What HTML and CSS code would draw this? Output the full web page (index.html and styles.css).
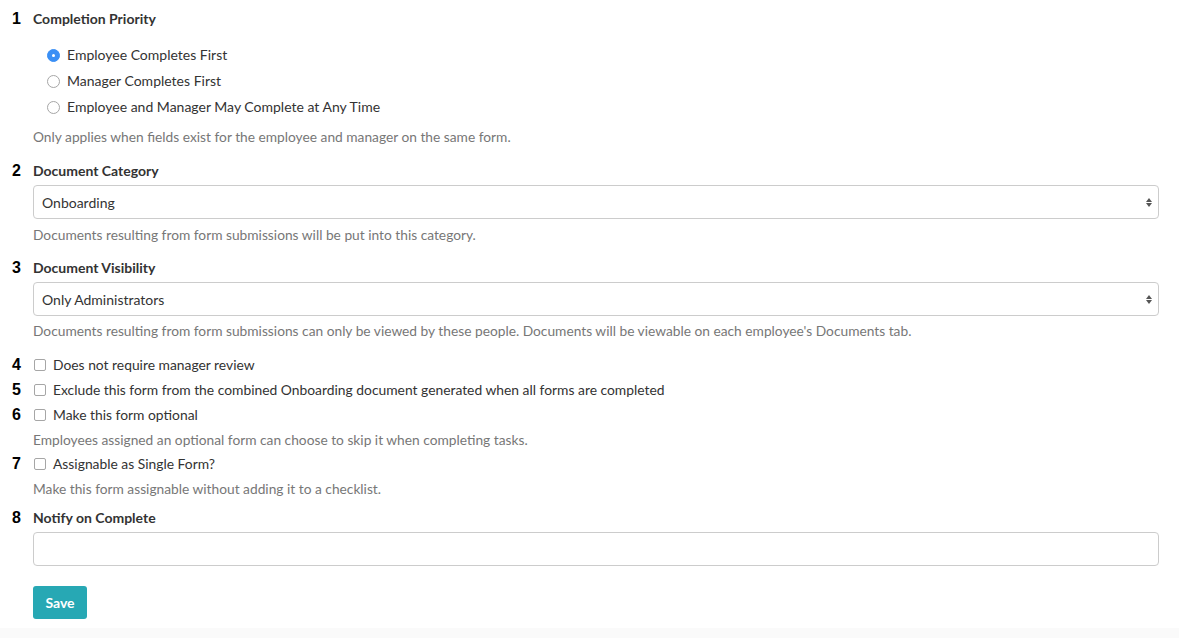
FILE: index.html
```html
<!DOCTYPE html>
<html>
<head>
<meta charset="utf-8">
<link rel="stylesheet" href="styles.css">
</head>
<body>
<div class="page">
  <form class="form">
    <div class="row title-row r1">
      <span class="num">1</span>
      <span class="title">Completion Priority</span>
    </div>
    <div class="radios">
      <label class="radio-row"><span class="radio checked"></span>Employee Completes First</label>
      <label class="radio-row"><span class="radio"></span>Manager Completes First</label>
      <label class="radio-row"><span class="radio"></span>Employee and Manager May Complete at Any Time</label>
    </div>
    <p class="help h1">Only applies when fields exist for the employee and manager on the same form.</p>

    <div class="row title-row r2">
      <span class="num">2</span>
      <span class="title">Document Category</span>
    </div>
    <div class="select"><span>Onboarding</span><span class="arrows"><i class="up"></i><i class="down"></i></span></div>
    <p class="help h2">Documents resulting from form submissions will be put into this category.</p>

    <div class="row title-row r3">
      <span class="num">3</span>
      <span class="title">Document Visibility</span>
    </div>
    <div class="select"><span>Only Administrators</span><span class="arrows"><i class="up"></i><i class="down"></i></span></div>
    <p class="help h3">Documents resulting from form submissions can only be viewed by these people. Documents will be viewable on each employee's Documents tab.</p>

    <div class="row check-row c4">
      <span class="num">4</span>
      <span class="check"></span><span class="label">Does not require manager review</span>
    </div>
    <div class="row check-row c5">
      <span class="num">5</span>
      <span class="check"></span><span class="label">Exclude this form from the combined Onboarding document generated when all forms are completed</span>
    </div>
    <div class="row check-row c5">
      <span class="num">6</span>
      <span class="check"></span><span class="label">Make this form optional</span>
    </div>
    <p class="help h6">Employees assigned an optional form can choose to skip it when completing tasks.</p>
    <div class="row check-row c7">
      <span class="num">7</span>
      <span class="check"></span><span class="label">Assignable as Single Form?</span>
    </div>
    <p class="help h7">Make this form assignable without adding it to a checklist.</p>

    <div class="row title-row r8">
      <span class="num">8</span>
      <span class="title">Notify on Complete</span>
    </div>
    <div class="input"></div>
    <div class="actions"><button type="button" class="save">Save</button></div>
  </form>
</div>
<div class="footer"></div>
</body>
</html>
```

FILE: styles.css
```css
html, body {
  margin: 0;
  padding: 0;
  background: #fafafa;
}
body {
  font-family: Lato, "Open Sans", sans-serif;
  font-size: 14px;
  color: #333;
}
.page {
  background: #fff;
  padding: 9px 20px 9px 12px;
}
.form {
  display: flex;
  flex-direction: column;
  margin: 0;
}
.row {
  display: flex;
  align-items: center;
  height: 20px;
  line-height: 20px;
}
.num {
  width: 21px;
  flex: none;
  font-family: "Liberation Sans", Arial, sans-serif;
  font-weight: bold;
  font-size: 16px;
  color: #000;
}
.title {
  font-weight: bold;
  color: #333;
  font-size: 14px;
}
.radios {
  display: flex;
  flex-direction: column;
  margin: 13px 0 0 35px;
}
.radio-row {
  display: flex;
  align-items: center;
  height: 26px;
  line-height: 26px;
  color: #333;
}
.radio {
  width: 11px;
  height: 11px;
  border: 1px solid #a6a6a6;
  border-radius: 50%;
  margin-right: 7px;
  box-sizing: content-box;
  background: #fff;
  position: relative;
  flex: none;
}
.radio.checked {
  border-color: #3a8ff5;
  background: #3a8ff5;
}
.radio.checked::after {
  content: "";
  position: absolute;
  left: 4px;
  top: 4px;
  width: 3px;
  height: 3px;
  border-radius: 50%;
  background: #fff;
}
.help {
  margin: 0 0 0 21px;
  height: 20px;
  line-height: 20px;
  font-size: 13.75px;
  color: #777;
}
.h1 { margin-top: 7px; }
.r2 { margin-top: 14px; }
.select {
  margin: 4px 0 0 21px;
  height: 34px;
  box-sizing: border-box;
  border: 1px solid #ccc;
  border-radius: 4px;
  display: flex;
  align-items: center;
  justify-content: space-between;
  padding: 0 5px 0 8px;
  color: #333;
  background: #fff;
}
.arrows {
  display: flex;
  flex-direction: column;
  align-items: center;
  gap: 1px;
  width: 8px;
}
.arrows i {
  width: 0;
  height: 0;
  border-left: 3.5px solid transparent;
  border-right: 3.5px solid transparent;
}
.arrows .up { border-bottom: 4px solid #555; }
.arrows .down { border-top: 4px solid #555; }
.h2 { margin-top: 6px; }
.r3 { margin-top: 13px; }
.h3 { margin-top: 5px; }
.check {
  width: 10px;
  height: 10px;
  border: 1px solid #a6a6a6;
  border-radius: 2px;
  background: #fff;
  margin: 0 7px 0 1px;
  flex: none;
}
.label { color: #333; font-size: 13.85px; }
.c4 { margin-top: 14px; }
.c5 { margin-top: 5px; }
.h6 { margin-top: 5px; }
.c7 { margin-top: 4px; }
.h7 { margin-top: 5px; }
.r8 { margin-top: 9px; }
.input {
  margin: 4px 0 0 21px;
  height: 34px;
  box-sizing: border-box;
  border: 1px solid #ccc;
  border-radius: 4px;
  background: #fff;
}
.actions {
  margin: 20px 0 0 21px;
  display: flex;
}
.save {
  width: 54px;
  height: 33px;
  border: none;
  border-radius: 3px;
  background: #27a8b4;
  color: #fff;
  font-family: Lato, sans-serif;
  font-weight: bold;
  font-size: 14px;
  padding: 0;
}
.footer {
  height: 20px;
}
```
